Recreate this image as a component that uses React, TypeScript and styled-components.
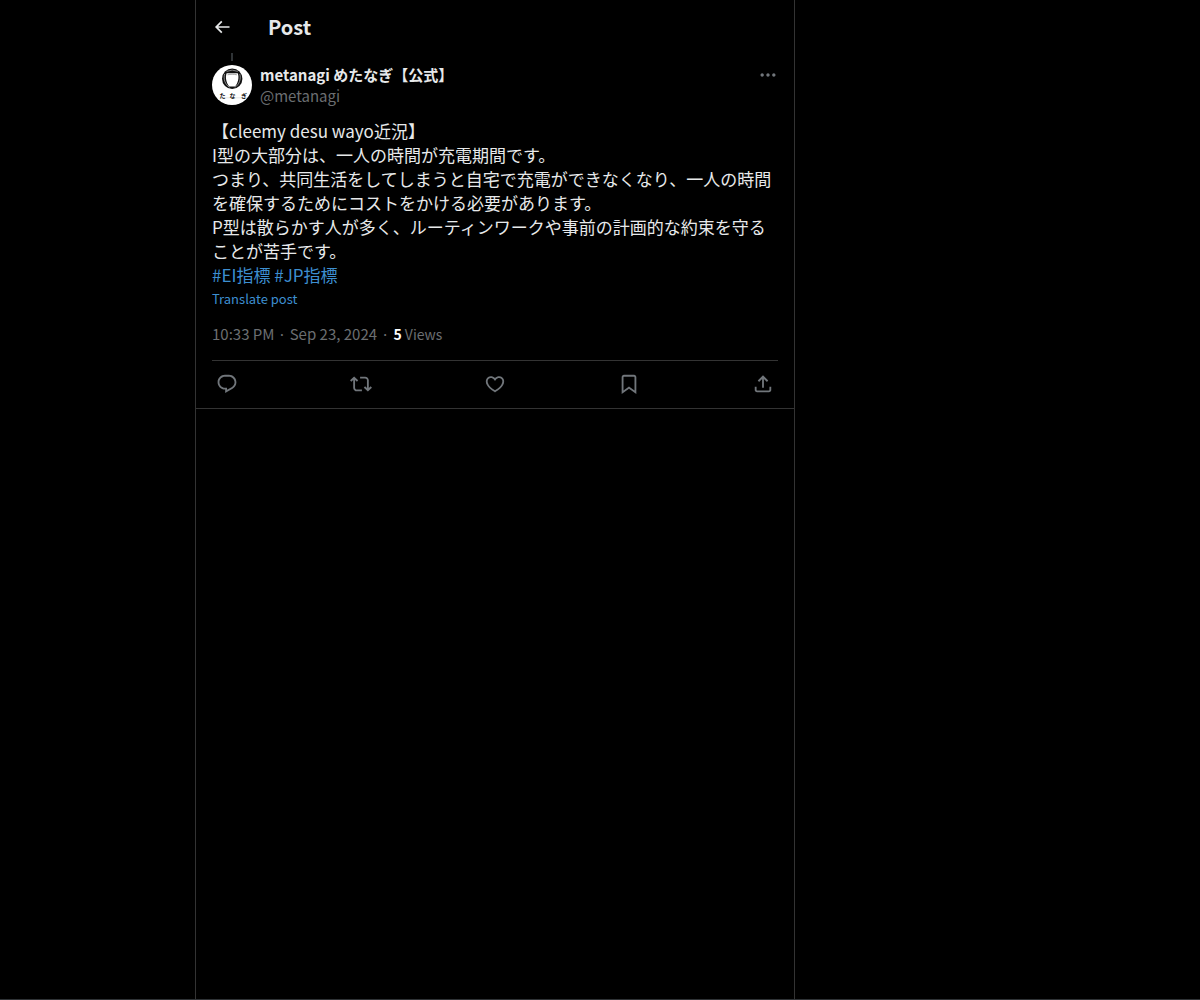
import React from "react";
import styled, { createGlobalStyle } from "styled-components";

const color = {
  bg: "#000000",
  text: "#e7e9ea",
  strong: "#ffffff",
  muted: "#71767b",
  dim: "#6b6e71",
  line: "#2f3336",
  rule: "#333333",
  link: "#3d8fd1",
};

const GlobalStyle = createGlobalStyle`
  *, *::before, *::after { box-sizing: border-box; }
  html { background: ${color.bg}; }
  body {
    margin: 0;
    color: ${color.text};
    font-family: "Noto Sans CJK JP", "Noto Sans", sans-serif;
    font-size: 15px;
    line-height: 20px;
  }
`;

const Page = styled.div`
  display: grid;
  grid-template-columns: 13fr minmax(0, 600px) 27fr;
  min-height: 100vh;
  border-bottom: 1px solid ${color.line};
`;

const Column = styled.main`
  grid-column: 2;
  border: solid ${color.rule};
  border-width: 0 1px;
`;

const Header = styled.header`
  display: flex;
  align-items: center;
  gap: 36px;
  height: 53px;
  padding: 0 16px;
`;

const Title = styled.h1`
  margin: 0;
  font-size: 20px;
  line-height: 24px;
  font-weight: 700;
`;

const IconButton = styled.button<{ $tone?: string }>`
  display: flex;
  padding: 0;
  border: 0;
  background: none;
  color: ${(p) => p.$tone ?? color.muted};
  cursor: pointer;
`;

const Glyph = styled.svg<{ $size: number }>`
  display: block;
  width: ${(p) => p.$size}px;
  height: ${(p) => p.$size}px;
  fill: currentColor;
`;

const Post = styled.article`
  padding: 0 16px;
  border-bottom: 1px solid ${color.rule};
`;

const Thread = styled.div`
  width: 2px;
  height: 8px;
  margin: 0 19px 4px;
  background: ${color.line};
`;

const Author = styled.div`
  display: flex;
  align-items: flex-start;
  gap: 8px;
`;

const Avatar = styled.svg`
  display: block;
  width: 40px;
  height: 40px;
  border-radius: 50%;
  font-family: "Noto Sans CJK JP", sans-serif;
`;

const Names = styled.div`
  display: flex;
  flex: 1;
  flex-direction: column;
  gap: 1px;
`;

const Name = styled.a`
  color: ${color.text};
  font-weight: 700;
  text-decoration: none;
`;

const Handle = styled.a`
  color: ${color.dim};
  text-decoration: none;
`;

const Body = styled.p`
  margin: 13px 0 0;
  font-size: 17px;
  line-height: 24px;
  white-space: pre-line;
`;

const Tag = styled.a`
  color: ${color.link};
  text-decoration: none;
`;

const Translate = styled.button`
  display: block;
  padding: 0;
  border: 0;
  background: none;
  color: ${color.link};
  font-family: inherit;
  font-size: 13px;
  line-height: 24px;
  cursor: pointer;
`;

const Meta = styled.div`
  display: flex;
  gap: 4px;
  padding: 13px 0 16px;
  border-bottom: 1px solid ${color.rule};
  color: ${color.dim};
`;

const Views = styled.span`
  font-size: 14px;
`;

const Count = styled.strong`
  color: ${color.strong};
  font-weight: 700;
`;

const Actions = styled.div`
  display: flex;
  align-items: center;
  justify-content: space-between;
  height: 47px;
  padding: 0 4px 1px;
`;

const paths = {
  back: "M7.414 13l5.043 5.04-1.414 1.42L3.586 12l7.457-7.46 1.414 1.42L7.414 11H21v2H7.414z",
  more: "M3 12c0-1.1.9-2 2-2s2 .9 2 2-.9 2-2 2-2-.9-2-2zm9 2c1.1 0 2-.9 2-2s-.9-2-2-2-2 .9-2 2 .9 2 2 2zm7 0c1.1 0 2-.9 2-2s-.9-2-2-2-2 .9-2 2 .9 2 2 2z",
  reply:
    "M1.751 10c0-4.42 3.584-8 8.005-8h4.366c4.49 0 8.129 3.64 8.129 8.13 0 2.96-1.607 5.68-4.196 7.11l-8.054 4.46v-3.69h-.067c-4.49.1-8.183-3.51-8.183-8.01zm8.005-6c-3.317 0-6.005 2.69-6.005 6 0 3.37 2.77 6.08 6.138 6.01l.351-.01h1.761v2.3l5.087-2.81c1.951-1.08 3.163-3.13 3.163-5.36 0-3.39-2.744-6.13-6.129-6.13H9.756z",
  repost:
    "M4.5 3.88l4.432 4.14-1.364 1.46L5.5 7.55V16c0 1.1.896 2 2 2H13v2H7.5c-2.209 0-4-1.79-4-4V7.55L1.432 9.48.068 8.02 4.5 3.88zM16.5 6H11V4h5.5c2.209 0 4 1.79 4 4v8.45l2.068-1.93 1.364 1.46-4.432 4.14-4.432-4.14 1.364-1.46 2.068 1.93V8c0-1.1-.896-2-2-2z",
  like: "M16.697 5.5c-1.222-.06-2.679.51-3.89 2.16l-.805 1.09-.806-1.09C9.984 6.01 8.526 5.44 7.304 5.5c-1.243.07-2.349.78-2.91 1.91-.552 1.12-.633 2.78.479 4.82 1.074 1.97 3.257 4.27 7.129 6.61 3.87-2.34 6.052-4.64 7.126-6.61 1.111-2.04 1.03-3.7.477-4.82-.561-1.13-1.666-1.84-2.908-1.91zm4.187 7.69c-1.351 2.48-4.001 5.12-8.379 7.67l-.503.3-.504-.3c-4.379-2.55-7.029-5.19-8.382-7.67-1.36-2.5-1.41-4.86-.514-6.67.887-1.79 2.647-2.91 4.601-3.01 1.651-.09 3.368.56 4.798 2.01 1.429-1.45 3.146-2.1 4.796-2.01 1.954.1 3.714 1.22 4.601 3.01.896 1.81.846 4.17-.514 6.67z",
  bookmark:
    "M4 4.5C4 3.12 5.119 2 6.5 2h11C18.881 2 20 3.12 20 4.5v18.44l-8-5.71-8 5.71V4.5zM6.5 4c-.276 0-.5.22-.5.5v14.56l6-4.29 6 4.29V4.5c0-.28-.224-.5-.5-.5h-11z",
  share:
    "M12 2.59l5.7 5.7-1.41 1.42L13 6.41V16h-2V6.41l-3.3 3.3-1.41-1.42L12 2.59zM21 15l-.02 3.51c0 1.38-1.12 2.49-2.5 2.49H5.5C4.11 21 3 19.88 3 18.5V15h2v3.5c0 .28.22.5.5.5h12.98c.28 0 .5-.22.5-.5L19 15h2z",
};

type IconName = keyof typeof paths;

function Icon({ name, size }: { name: IconName; size: number }) {
  return (
    <Glyph $size={size} viewBox="0 0 24 24" aria-hidden="true">
      <path d={paths[name]} />
    </Glyph>
  );
}

function AvatarArt() {
  return (
    <Avatar viewBox="0 0 40 40" role="img" aria-label="metanagi">
      <rect width="40" height="40" fill="#fff" />
      <ellipse cx="20.2" cy="13.8" rx="10.2" ry="10.3" fill="#111" />
      <path
        d="M12.6 9c-1.400 5 .4 10.500 5 13.300M27.800 9c1.400 5-.4 10.500-5 13.300"
        fill="none"
        stroke="#bbb"
        strokeWidth="0.7"
      />
      <path d="M14.600 8.200h11.200c1.600 4.500.2 10-2.800 13.400h-5.600c-3-3.400-4.400-8.900-2.800-13.400z" fill="#fff" />
      <path d="M15.500 9.800c3-.7 6.400-.7 9.400 0" fill="none" stroke="#666" strokeWidth="0.6" />
      <path d="M14.600 6.400q5.600-2.600 11.200 0" fill="none" stroke="#ccc" strokeWidth="0.6" />
      <path d="M8 32.800h27" stroke="#ccc" strokeWidth="0.5" />
      <g fill="#111" fontSize="6" fontWeight="700" textAnchor="middle">
        <text x="10.500" y="32.500">た</text>
        <text x="20.500" y="32.500">な</text>
        <text x="32" y="32.500">ぎ</text>
      </g>
    </Avatar>
  );
}

const actions: { name: IconName; label: string }[] = [
  { name: "reply", label: "Reply" },
  { name: "repost", label: "Repost" },
  { name: "like", label: "Like" },
  { name: "bookmark", label: "Bookmark" },
  { name: "share", label: "Share post" },
];

const text = `【cleemy desu wayo近況】
I型の大部分は、一人の時間が充電期間です。
つまり、共同生活をしてしまうと自宅で充電ができなくなり、一人の時間を確保するためにコストをかける必要があります。
P型は散らかす人が多く、ルーティンワークや事前の計画的な約束を守ることが苦手です。
`;

export default function App() {
  return (
    <>
      <GlobalStyle />
      <Page lang="ja">
        <Column>
          <Header>
            <IconButton $tone={color.text} aria-label="Back">
              <Icon name="back" size={20} />
            </IconButton>
            <Title>Post</Title>
          </Header>
          <Post>
            <Thread />
            <Author>
              <AvatarArt />
              <Names>
                <Name href="#profile">metanagi めたなぎ【公式】</Name>
                <Handle href="#profile">@metanagi</Handle>
              </Names>
              <IconButton aria-label="More">
                <Icon name="more" size={20} />
              </IconButton>
            </Author>
            <Body>
              {text}
              <Tag href="#ei">#EI指標</Tag> <Tag href="#jp">#JP指標</Tag>
            </Body>
            <Translate>Translate post</Translate>
            <Meta>
              <time dateTime="2024-09-23T22:33">10:33 PM · Sep 23, 2024</time>
              <span>·</span>
              <Views>
                <Count>5</Count> Views
              </Views>
            </Meta>
            <Actions>
              {actions.map((a) => (
                <IconButton key={a.name} aria-label={a.label}>
                  <Icon name={a.name} size={22} />
                </IconButton>
              ))}
            </Actions>
          </Post>
        </Column>
      </Page>
    </>
  );
}
